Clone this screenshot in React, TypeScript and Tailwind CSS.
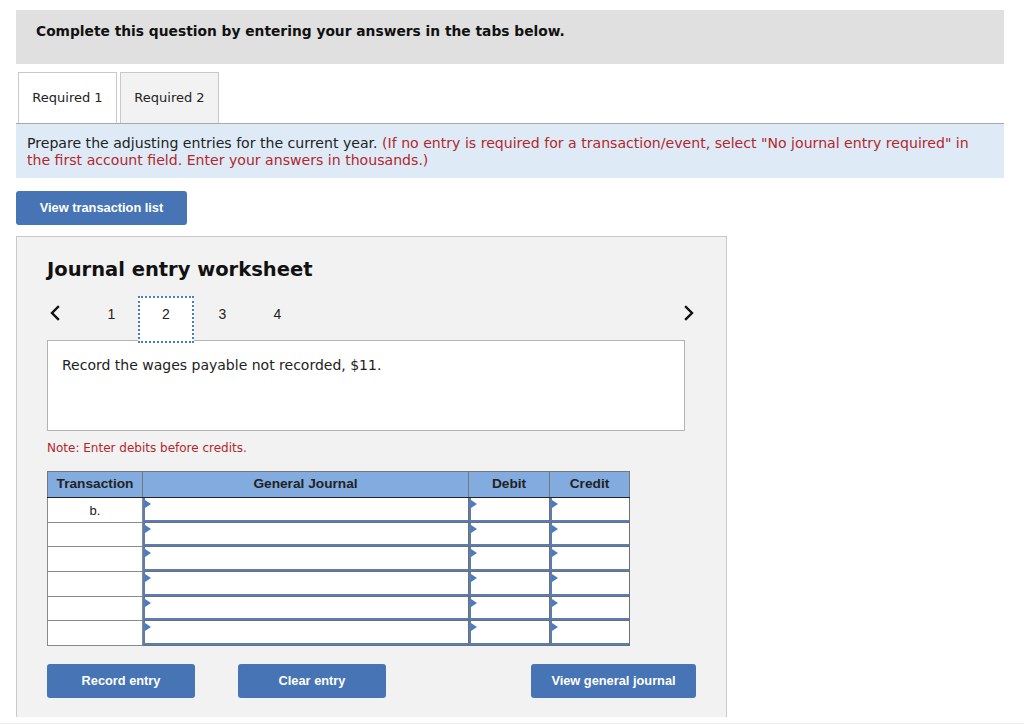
import React from 'react';

const verdana = { fontFamily: '"DejaVu Sans", Verdana, sans-serif' };
const arial = { fontFamily: '"Liberation Sans", Arial, sans-serif' };

function Chevron({ dir }: { dir: 'left' | 'right' }) {
  return (
    <svg width="12" height="16" viewBox="0 0 12 16" fill="none">
      <path
        d={dir === 'left' ? 'M9 2 L3 8 L9 14' : 'M3 2 L9 8 L3 14'}
        stroke="#111"
        strokeWidth={2.4}
        strokeLinecap="square"
      />
    </svg>
  );
}

// input cell with the little blue marker in the corner
function InputCell() {
  return (
    <td className="p-0 border border-[#6f6f6f]">
      <div className="relative h-[23.67px] bg-white border-l-2 border-b-2 border-[#5a7db5]">
        <div className="absolute left-0 top-[2px] w-0 h-0 border-y-[4px] border-y-transparent border-l-[6px] border-l-[#4a7cc0]" />
      </div>
    </td>
  );
}

export default function App() {
  const rows = ['b.', '', '', '', '', ''];
  const pages = ['1', '2', '3', '4'];

  return (
    <div className="min-h-[726px] bg-white text-[#222]" style={verdana}>
      <div className="pl-4 pr-5 pt-[10px]">
        {/* question header */}
        <div className="h-[54px] bg-[#e0e0e0] pl-5 pt-[13px]">
          <p className="text-[13.8px] font-bold leading-[17px] text-[#111]">
            Complete this question by entering your answers in the tabs below.
          </p>
        </div>

        {/* tabs */}
        <div className="mt-2 ml-[2px] flex gap-[3px]">
          <div className="w-[99px] h-[51px] flex items-center justify-center bg-white border border-b-0 border-[#c8c8c8] text-[13px]">
            Required 1
          </div>
          <div className="w-[99px] h-[51px] flex items-center justify-center bg-[#f2f2f2] border border-b-0 border-[#c8c8c8] text-[13px]">
            Required 2
          </div>
        </div>

        {/* instructions */}
        <div className="border-t border-[#a9a9a9] bg-[#deebf7] pl-[11px] pr-[26px] pt-[11px] h-[55px] text-[14.1px] leading-[17px]">
          Prepare the adjusting entries for the current year.{' '}
          <span className="text-[#b3262b]">
            (If no entry is required for a transaction/event, select "No journal entry required" in the first account field. Enter your answers in thousands.)
          </span>
        </div>

        <button
          className="mt-[13px] w-[171px] h-[34px] rounded-[3px] bg-[#4674b4] text-white text-[12.8px] font-bold"
          style={arial}
        >
          View transaction list
        </button>

        {/* worksheet panel */}
        <div className="mt-[11px] w-[711px] h-[481px] border border-b-0 border-[#c8c8c8] bg-[#f2f2f2] pl-[30px]">
          <h2 className="mt-[21px] text-[19.5px] font-bold leading-[24px] text-[#111]">Journal entry worksheet</h2>

          <div className="mt-[14px] w-[648px] flex items-start h-[44px]" style={arial}>
            <div className="w-[36px] pt-[9px] pl-[2px]">
              <Chevron dir="left" />
            </div>
            {pages.map(p =>
              p === '2' ? (
                <div
                  key={p}
                  className="relative z-10 w-[56px] h-[47px] bg-white border-2 border-dotted border-[#4a7cc0] text-center text-[14px] pt-[6px]"
                >
                  {p}
                </div>
              ) : (
                <div key={p} className="w-[55px] text-center text-[14px] pt-[8px] pl-[2px]">
                  {p}
                </div>
              )
            )}
            <div className="ml-auto pt-[9px]">
              <Chevron dir="right" />
            </div>
          </div>

          <div className="w-[638px] h-[91px] bg-white border border-[#b3b3b3] pl-[14px] pt-[16px] text-[14px] leading-[17px]">
            Record the wages payable not recorded, $11.
          </div>

          <p className="mt-[9px] text-[12px] leading-[16px] text-[#b3262b]">Note: Enter debits before credits.</p>

          <table className="mt-[15px] border-collapse" style={arial}>
            <thead>
              <tr className="h-[26px] bg-[#82abe0] text-[13.7px] font-bold text-[#222]">
                <th className="w-[95px] border border-[#777] border-b-[#222]">Transaction</th>
                <th className="w-[326px] border border-[#777] border-b-[#222]">General Journal</th>
                <th className="w-[81px] border border-[#777] border-b-[#222]">Debit</th>
                <th className="w-[80px] border border-[#777] border-b-[#222]">Credit</th>
              </tr>
            </thead>
            <tbody>
              {rows.map((r, i) => (
                <tr key={i}>
                  <td className="bg-white border border-[#8a8a8a] text-center text-[13px] align-top pt-[3px]">{r}</td>
                  <InputCell />
                  <InputCell />
                  <InputCell />
                </tr>
              ))}
            </tbody>
          </table>

          <div className="mt-[18px] w-[649px] flex" style={arial}>
            <button className="w-[148px] h-[34px] rounded-[3px] bg-[#4674b4] text-white text-[12.8px] font-bold">
              Record entry
            </button>
            <button className="ml-[43px] w-[148px] h-[34px] rounded-[3px] bg-[#4674b4] text-white text-[12.8px] font-bold">
              Clear entry
            </button>
            <button className="ml-auto w-[165px] h-[34px] rounded-[3px] bg-[#4674b4] text-white text-[12.8px] font-bold">
              View general journal
            </button>
          </div>
        </div>
      </div>
      <div className="mt-[6px] h-[1px] bg-[#ececec]" />
    </div>
  );
}
